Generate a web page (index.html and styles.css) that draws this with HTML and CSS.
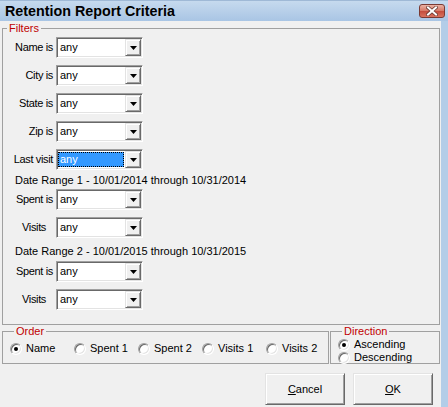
FILE: index.html
```html
<!DOCTYPE html>
<html>
<head>
<meta charset="utf-8">
<title>Retention Report Criteria</title>
<link rel="stylesheet" href="styles.css">
</head>
<body>
<div class="window">
  <div class="titlebar">
    <span class="title">Retention Report Criteria</span>
    <span class="close">
      <svg width="12" height="10" viewBox="0 0 12 10">
        <path d="M2 1.5 L10 8.5 M10 1.5 L2 8.5" stroke="#6b3a32" stroke-width="3.6" stroke-linecap="square"/>
        <path d="M2 1.5 L10 8.5 M10 1.5 L2 8.5" stroke="#ffffff" stroke-width="2" stroke-linecap="square"/>
      </svg>
    </span>
  </div>
  <div class="client">
    <fieldset class="group filters">
      <legend>Filters</legend>
      <div class="row"><span class="lbl">Name is</span><div class="combo"><span class="value">any</span><span class="drop"><svg width="7" height="4" viewBox="0 0 7 4"><path d="M0 0H7L3.5 4Z" fill="#000"/></svg></span></div></div>
      <div class="row gap"><span class="lbl">City is</span><div class="combo"><span class="value">any</span><span class="drop"><svg width="7" height="4" viewBox="0 0 7 4"><path d="M0 0H7L3.5 4Z" fill="#000"/></svg></span></div></div>
      <div class="row gap"><span class="lbl">State is</span><div class="combo"><span class="value">any</span><span class="drop"><svg width="7" height="4" viewBox="0 0 7 4"><path d="M0 0H7L3.5 4Z" fill="#000"/></svg></span></div></div>
      <div class="row gap"><span class="lbl">Zip is</span><div class="combo"><span class="value">any</span><span class="drop"><svg width="7" height="4" viewBox="0 0 7 4"><path d="M0 0H7L3.5 4Z" fill="#000"/></svg></span></div></div>
      <div class="row gap"><span class="lbl">Last visit</span><div class="combo"><span class="value sel">any</span><span class="drop"><svg width="7" height="4" viewBox="0 0 7 4"><path d="M0 0H7L3.5 4Z" fill="#000"/></svg></span></div></div>
      <div class="note note1">Date Range 1 - 10/01/2014 through 10/31/2014</div>
      <div class="row after1"><span class="lbl">Spent is</span><div class="combo"><span class="value">any</span><span class="drop"><svg width="7" height="4" viewBox="0 0 7 4"><path d="M0 0H7L3.5 4Z" fill="#000"/></svg></span></div></div>
      <div class="row gap"><span class="lbl visits">Visits</span><div class="combo"><span class="value">any</span><span class="drop"><svg width="7" height="4" viewBox="0 0 7 4"><path d="M0 0H7L3.5 4Z" fill="#000"/></svg></span></div></div>
      <div class="note note2">Date Range 2 - 10/01/2015 through 10/31/2015</div>
      <div class="row after2"><span class="lbl">Spent is</span><div class="combo"><span class="value">any</span><span class="drop"><svg width="7" height="4" viewBox="0 0 7 4"><path d="M0 0H7L3.5 4Z" fill="#000"/></svg></span></div></div>
      <div class="row gap"><span class="lbl visits">Visits</span><div class="combo"><span class="value">any</span><span class="drop"><svg width="7" height="4" viewBox="0 0 7 4"><path d="M0 0H7L3.5 4Z" fill="#000"/></svg></span></div></div>
    </fieldset>
    <div class="bottom">
      <fieldset class="group order">
        <legend>Order</legend>
        <div class="options">
          <span class="opt"><span class="radio checked"></span>Name</span>
          <span class="opt"><span class="radio"></span>Spent 1</span>
          <span class="opt"><span class="radio"></span>Spent 2</span>
          <span class="opt"><span class="radio"></span>Visits 1</span>
          <span class="opt"><span class="radio"></span>Visits 2</span>
        </div>
      </fieldset>
      <fieldset class="group direction">
        <legend>Direction</legend>
        <span class="opt"><span class="radio checked"></span>Ascending</span>
        <span class="opt"><span class="radio"></span>Descending</span>
      </fieldset>
    </div>
    <div class="buttons">
      <button class="btn"><u>C</u>ancel</button>
      <button class="btn"><u>O</u>K</button>
    </div>
  </div>
</div>
</body>
</html>
```
FILE: styles.css
```css
* { box-sizing: border-box; }
html, body { margin: 0; padding: 0; }
body {
  width: 448px;
  height: 407px;
  overflow: hidden;
  background: #f0f0f0;
  color: #000;
  font-family: "Liberation Sans", Arial, sans-serif;
  font-size: 11px;
}
.window {
  width: 448px;
  height: 407px;
  display: flex;
  flex-direction: column;
}
.titlebar {
  flex: none;
  height: 21px;
  display: flex;
  align-items: center;
  justify-content: space-between;
  padding: 0 3px 0 5px;
  background: linear-gradient(#c6daee, #a9c5e4);
  border-top: 1px solid #9fb9d6;
}
.title {
  font-weight: bold;
  font-size: 14.3px;
  line-height: 16px;
}
.close {
  width: 26px;
  height: 14px;
  border: 1px solid #7a3a33;
  border-radius: 3px;
  background: linear-gradient(#eab2a4, #d67a68 48%, #c44c3c 52%, #d9735f);
  display: flex;
  align-items: center;
  justify-content: center;
}
.client {
  flex: 1;
  display: flex;
  flex-direction: column;
  padding: 1px 1px 0 2px;
  border-right: 7px solid #b3cde8;
}
.group {
  margin: 0;
  min-width: 0;
  border: 1px solid #a0a0a0;
}
.group legend {
  margin-left: 4px;
  padding: 0 2px;
  color: #c00000;
  font-size: 11px;
  line-height: 13px;
}
.filters {
  padding: 2px 0 14px 0;
}
.row {
  display: grid;
  grid-template-columns: 50px 87px;
  column-gap: 3px;
  height: 21px;
  align-items: center;
}
.row.gap { margin-top: 7px; }
.row.after1 { margin-top: 2px; }
.row.after2 { margin-top: 3px; }
.lbl {
  text-align: right;
  line-height: 13px;
  white-space: nowrap;
  letter-spacing: -0.35px;
}
.lbl.visits { padding-right: 7px; }
.note {
  line-height: 13px;
  padding-left: 12px;
}
.note1 { margin-top: 4px; }
.note2 { margin-top: 7px; }
.combo {
  width: 87px;
  height: 21px;
  display: flex;
  padding: 1px;
  background: #fff;
  border: 1px solid;
  border-color: #a0a0a0 #ffffff #ffffff #a0a0a0;
  box-shadow: inset 1px 1px #696969, inset -1px -1px #e3e3e3;
}
.value {
  flex: 1;
  padding-left: 2px;
  line-height: 17px;
}
.value.sel {
  margin: 1px 1px 1px 0;
  padding-left: 1px;
  line-height: 13px;
  background: #3399ff;
  color: #fff;
  border: 1px dotted #000;
}
.drop {
  width: 16px;
  height: 17px;
  display: flex;
  align-items: center;
  justify-content: center;
  background: #f0f0f0;
  border: 1px solid;
  border-color: #e3e3e3 #696969 #696969 #e3e3e3;
  box-shadow: inset 1px 1px #ffffff, inset -1px -1px #a0a0a0;
}
.bottom {
  display: flex;
  gap: 1px;
  height: 39px;
}
.order {
  width: 327px;
  height: 100%;
  padding: 4px 0 0 7px;
}
.options {
  display: grid;
  grid-template-columns: repeat(5, 64px);
}
.direction {
  flex: 1;
  height: 100%;
  padding: 0 0 0 7px;
}
.opt {
  display: flex;
  align-items: center;
  gap: 4px;
  height: 13px;
  line-height: 13px;
  white-space: nowrap;
}
.radio {
  position: relative;
  flex: none;
  width: 12px;
  height: 12px;
  border-radius: 50%;
  background: #fff;
  border: 1px solid;
  border-color: #a0a0a0 #ffffff #ffffff #a0a0a0;
  box-shadow: inset 1px 1px #696969, inset -1px -1px #e3e3e3;
}
.radio.checked::after {
  content: "";
  position: absolute;
  left: 3px;
  top: 3px;
  width: 4px;
  height: 4px;
  border-radius: 50%;
  background: #000;
}
.buttons {
  display: flex;
  justify-content: flex-end;
  gap: 8px;
  margin-top: 9px;
  padding-right: 7px;
}
.btn {
  width: 80px;
  height: 32px;
  padding: 0;
  font-family: "Liberation Sans", Arial, sans-serif;
  font-size: 11px;
  color: #000;
  background: #f0f0f0;
  border: 1px solid;
  border-color: #e3e3e3 #696969 #696969 #e3e3e3;
  box-shadow: inset 1px 1px #ffffff, inset -1px -1px #a0a0a0;
}
```
